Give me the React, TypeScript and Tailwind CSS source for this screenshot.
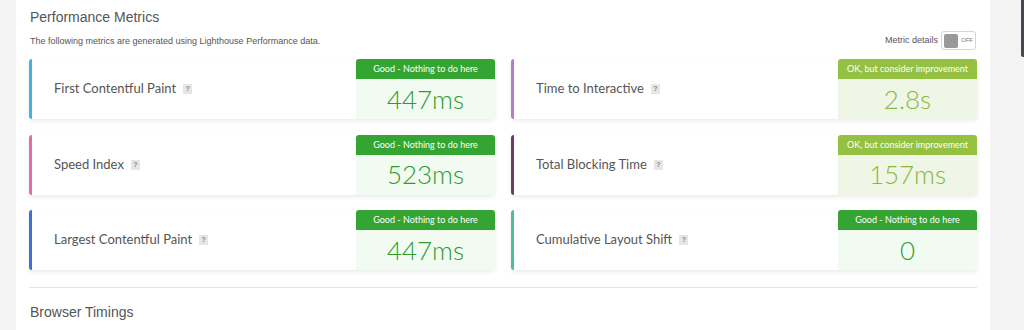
import React from "react";

type M = { title: string; value: string; border: string; ok: boolean };

const metrics: M[] = [
  { title: "First Contentful Paint", value: "447ms", border: "bg-[#3cb4e4]", ok: false },
  { title: "Time to Interactive", value: "2.8s", border: "bg-[#b47ccf]", ok: true },
  { title: "Speed Index", value: "523ms", border: "bg-[#e76ba8]", ok: false },
  { title: "Total Blocking Time", value: "157ms", border: "bg-[#6a3c69]", ok: true },
  { title: "Largest Contentful Paint", value: "447ms", border: "bg-[#3d6fd5]", ok: false },
  { title: "Cumulative Layout Shift", value: "0", border: "bg-[#4dbd9a]", ok: false },
];

function Card({ m }: { m: M }) {
  return (
    <div className="flex h-[60px] bg-white rounded-[3px] shadow-[0_2px_4px_rgba(0,0,0,0.08)]">
      <div className={`w-[3px] rounded-l-[3px] ${m.border}`} />
      <div className="flex-1 flex items-center pl-[22px]">
        <span className="text-[13px] text-[#555] font-['Lato',sans-serif]">{m.title}</span>
        <span className="ml-[7px] w-[9px] h-[10px] bg-[#e6e6e6] text-[7px] leading-[10px] text-center font-bold text-[#888] font-['Liberation_Sans',sans-serif]">
          ?
        </span>
      </div>
      <div className="w-[139px] flex flex-col">
        <div
          className={`h-[20px] rounded-t-[3px] flex items-center justify-center text-white text-[9px] font-['Lato',sans-serif] ${
            m.ok ? "bg-[#95c143]" : "bg-[#34a533]"
          }`}
        >
          {m.ok ? "OK, but consider improvement" : "Good - Nothing to do here"}
        </div>
        <div
          className={`flex-1 flex items-center justify-center text-[26px] font-light font-['Lato',sans-serif] ${
            m.ok ? "bg-[#f0f6e6] text-[#86ba40]" : "bg-[#f2fbf1] text-[#2f9c2c]"
          }`}
        >
          {m.value}
        </div>
      </div>
    </div>
  );
}

export default function App() {
  return (
    <div className="flex h-[330px] w-[1024px] bg-[#f3f3f3] overflow-hidden font-['Liberation_Sans',sans-serif]">
      <div className="w-[16px]" />
      <div className="w-[974px] bg-white px-[13px] pt-[8px]">
        <div className="flex items-end justify-between">
          <div className="pl-[1px]">
            <div className="text-[14px] text-[#555] leading-[18px]">Performance Metrics</div>
            <div className="text-[9px] text-[#555] mt-[9px] leading-[12px]">
              The following metrics are generated using Lighthouse Performance data.
            </div>
          </div>
          <div className="flex items-center gap-[3px] mb-[-3px] mr-[1px]">
            <span className="text-[9px] text-[#555]">Metric details</span>
            <div className="w-[35px] h-[19px] border border-[#d5d5d5] rounded-[3px] flex items-center px-[2px]">
              <div className="w-[16px] h-[14px] bg-[#999] rounded-[2px]" />
              <span className="ml-[3px] text-[6px] text-[#777]">OFF</span>
            </div>
          </div>
        </div>
        <div className="grid grid-cols-2 gap-x-[16px] gap-y-[15.5px] mt-[12px]">
          {metrics.map((m) => (
            <Card key={m.title} m={m} />
          ))}
        </div>
        <div className="mt-[17px] h-px bg-[#e5e5e5]" />
        <div className="mt-[14px] pl-[1px] text-[14px] text-[#555]">Browser Timings</div>
      </div>
      <div className="flex-1 flex justify-end">
        <div className="w-[3px] h-[57px] bg-[#4b4552] rounded-bl-[2px]" />
      </div>
    </div>
  );
}
